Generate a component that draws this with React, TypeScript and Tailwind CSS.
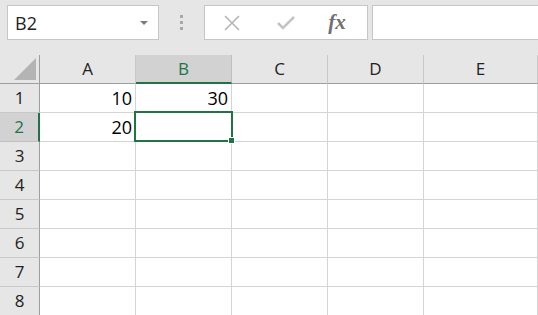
import React from "react";

const cols = ["A", "B", "C", "D", "E"];
const rows = [1, 2, 3, 4, 5, 6, 7, 8];

const values: Record<string, string> = {
    A1: "10",
    B1: "30",
    A2: "20",
};

export default function App() {
    return (
        <div className="w-[538px] h-[315px] overflow-hidden bg-[#e6e6e6] font-['Open_Sans',sans-serif] text-[#222]">
            {/* Formula bar */}
            <div className="h-[55px] flex items-start pt-[5px] pl-[7px]">
                <div className="w-[152px] h-[35px] bg-white border border-[#c6c6c6] flex items-center justify-between pl-[7px] pr-[10px]">
                    <span className="text-[18px] leading-none text-[#222]">B2</span>
                    <div className="w-0 h-0 border-l-[4px] border-r-[4px] border-t-[4px] border-l-transparent border-r-transparent border-t-[#7a7a7a]" />
                </div>
                <div className="w-[45px] h-[35px] flex flex-col items-center justify-center gap-[3px]">
                    <div className="w-[3px] h-[3px] bg-[#a8a8a8]" />
                    <div className="w-[3px] h-[3px] bg-[#a8a8a8]" />
                    <div className="w-[3px] h-[3px] bg-[#a8a8a8]" />
                </div>
                <div className="w-[164px] h-[35px] bg-white border border-[#c6c6c6] flex items-center">
                    <div className="w-[54px] flex justify-center">
                        <svg width="18" height="18" viewBox="0 0 18 18">
                            <path d="M2 2 L16 16 M16 2 L2 16" stroke="#b4b4b4" strokeWidth="1.6" fill="none" />
                        </svg>
                    </div>
                    <div className="w-[54px] flex justify-center">
                        <svg width="20" height="16" viewBox="0 0 20 16">
                            <path d="M2 8 L7 13 L18 2" stroke="#c4c4c4" strokeWidth="2.6" fill="none" />
                        </svg>
                    </div>
                    <div className="flex-1 flex justify-center pr-[6px]">
                        <span className="font-['Liberation_Serif',serif] italic font-bold text-[21px] leading-none text-[#707070]">fx</span>
                    </div>
                </div>
                <div className="ml-[4px] flex-1 h-[35px] bg-white border border-[#c6c6c6] border-r-0" />
            </div>

            {/* Sheet grid */}
            <div className="grid grid-cols-[40px_96px_96px_96px_96px_1fr] auto-rows-[29px]">
                <div className="relative border-r border-b border-[#9e9e9e]">
                    <svg className="absolute right-[3px] bottom-[3px]" width="22" height="22" viewBox="0 0 22 22">
                        <polygon points="22,0 22,22 0,22" fill="#b4b4b4" />
                    </svg>
                </div>
                {cols.map((c) => (
                    <div
                        key={c}
                        className={
                            c === "B"
                                ? "flex items-center justify-center bg-[#d2d2d2] border-r border-[#bdbdbd] border-b-2 border-b-[#217346] text-[#217346] text-[17px]"
                                : "flex items-center justify-center border-r border-[#c8c8c8] border-b border-b-[#9e9e9e] text-[17px] text-[#222]"
                        }
                    >
                        {c}
                    </div>
                ))}

                {rows.map((r) => (
                    <React.Fragment key={r}>
                        <div
                            className={
                                r === 2
                                    ? "flex items-center justify-center bg-[#d2d2d2] border-b border-[#c0c0c0] border-r-2 border-r-[#217346] text-[#217346] text-[17px]"
                                    : "flex items-center justify-center border-b border-[#c8c8c8] border-r border-r-[#9e9e9e] text-[17px] text-[#222]"
                            }
                        >
                            {r}
                        </div>
                        {cols.map((c) => {
                            const id = `${c}${r}`;
                            const selected = id === "B2";
                            return (
                                <div
                                    key={id}
                                    className="relative bg-white border-r border-b border-[#d4d4d4] flex items-center justify-end pr-[3px] text-[18px] text-black"
                                >
                                    {values[id]}
                                    {selected && (
                                        <div className="absolute -left-[2px] -top-[2px] w-[99px] h-[31px] border-2 border-[#217346] z-10">
                                            <div className="absolute -right-[4px] -bottom-[4px] w-[7px] h-[7px] bg-[#217346] border border-white" />
                                        </div>
                                    )}
                                </div>
                            );
                        })}
                    </React.Fragment>
                ))}
            </div>
        </div>
    );
}
